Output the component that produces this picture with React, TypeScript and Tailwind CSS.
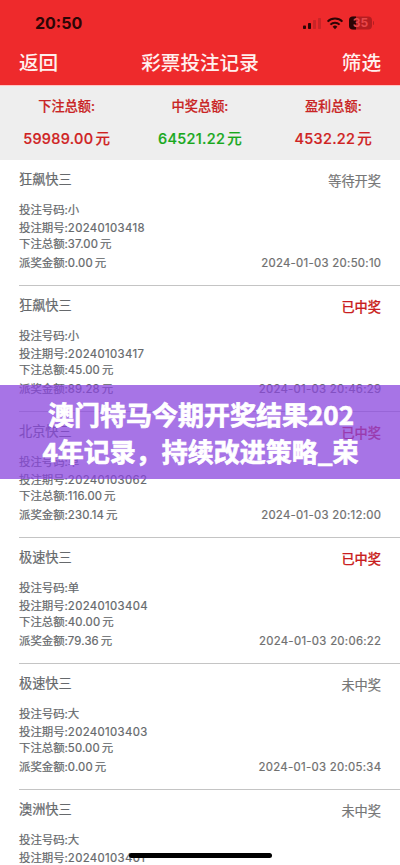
import React from "react";

type Status = "等待开奖" | "已中奖" | "未中奖";

interface Bet {
  game: string;
  status: Status;
  pick: string;
  issue: string;
  stake: string;
  prize: string;
  time: string;
}

const bets: Bet[] = [
  { game: "狂飙快三", status: "等待开奖", pick: "小", issue: "20240103418", stake: "37.00", prize: "0.00", time: "2024-01-03 20:50:10" },
  { game: "狂飙快三", status: "已中奖", pick: "小", issue: "20240103417", stake: "45.00", prize: "89.28", time: "2024-01-03 20:46:29" },
  { game: "北京快三", status: "已中奖", pick: "单", issue: "20240103062", stake: "116.00", prize: "230.14", time: "2024-01-03 20:12:00" },
  { game: "极速快三", status: "已中奖", pick: "单", issue: "20240103404", stake: "40.00", prize: "79.36", time: "2024-01-03 20:06:22" },
  { game: "极速快三", status: "未中奖", pick: "大", issue: "20240103403", stake: "50.00", prize: "0.00", time: "2024-01-03 20:05:34" },
];

const lastBet = { game: "澳洲快三", status: "未中奖", pick: "大", issue: "20240103401" };

const totals = [
  { label: "下注总额:", value: "59989.00", color: "text-[#cf2222]" },
  { label: "中奖总额:", value: "64521.22", color: "text-[#18a81c]" },
  { label: "盈利总额:", value: "4532.22", color: "text-[#cf2222]" },
];

function StatusBar() {
  return (
    <div className="flex h-[46px] items-center justify-between pl-[35px] pr-[26px]">
      <span className="text-[16px] leading-[20px] font-bold text-[#2d0505]">20:50</span>
      <svg width="72" height="14" viewBox="0 0 72 14">
        <g fill="#2d0505">
          <rect x="1" y="9.5" width="3" height="3.5" rx="0.8" />
          <rect x="6" y="7" width="3" height="6" rx="0.8" />
        </g>
        <g fill="#c92427">
          <rect x="11" y="4" width="3" height="9" rx="0.8" />
          <rect x="16" y="2" width="3" height="11" rx="0.8" />
        </g>
        <g fill="none" stroke="#2d0505" strokeWidth="2">
          <path d="M25.6 5.6a10.6 10.6 0 0 1 14.8 0" />
          <path d="M28.4 8.6a6.6 6.6 0 0 1 9.2 0" />
        </g>
        <path d="M33 13.2l-2.4-2.5a3.5 3.5 0 0 1 4.8 0z" fill="#2d0505" />
        <rect x="47" y="0.5" width="23" height="13" rx="4" fill="#b51d20" />
        <path d="M51 0.5h3v13h-3a4 4 0 0 1-4-4v-5a4 4 0 0 1 4-4z" fill="#2d0505" />
        <path d="M71 5v4a2.2 2.2 0 0 0 0-4z" fill="#b51d20" />
        <text x="58.5" y="11.2" textAnchor="middle" fontSize="12" fontWeight="700" fill="#e8474a" fontFamily="Inter, sans-serif">35</text>
      </svg>
    </div>
  );
}

function RowHeading({ game, status }: { game: string; status: string }) {
  const won = status === "已中奖";
  return (
    <div className="flex h-[41px] items-center justify-between text-[13.2px]">
      <span className="pb-px">{game}</span>
      <span className={won ? "pt-[2px] font-medium text-[#c91d20]" : "pt-[2px] text-[#777777]"}>{status}</span>
    </div>
  );
}

function PickAndIssue({ pick, issue }: { pick: string; issue: string }) {
  return (
    <>
      <div className="h-[18px] leading-[18px]">投注号码:{pick}</div>
      <div className="h-[19px] leading-[19px]">
        投注期号:<span className="tracking-[0.35px]">{issue}</span>
      </div>
    </>
  );
}

function Amount({ label, value }: { label: string; value: string }) {
  return (
    <span>
      {label}
      <span className="tracking-[0.15px]">{value}</span>
      <span className="ml-[2px]">元</span>
    </span>
  );
}

function BetRow({ bet }: { bet: Bet }) {
  return (
    <div className="ml-[19px] flex h-[126px] shrink-0 flex-col border-b border-[#c4c4c4] pr-[19px]">
      <RowHeading game={bet.game} status={bet.status} />
      <PickAndIssue pick={bet.pick} issue={bet.issue} />
      <div className="h-[13px] leading-[13px]">
        <Amount label="下注总额:" value={bet.stake} />
      </div>
      <div className="flex h-[25px] items-center justify-between">
        <Amount label="派奖金额:" value={bet.prize} />
        <span className="-mr-[0.3px] tracking-[0.29px] text-[#707070]">{bet.time}</span>
      </div>
    </div>
  );
}

export default function App() {
  return (
    <div className="relative flex h-[865px] w-[400px] flex-col overflow-hidden bg-white font-['Inter','Noto_Sans_CJK_SC',sans-serif]">
      <header className="h-[85px] shrink-0 bg-[#ee2a2c]">
        <StatusBar />
        <div className="grid h-[36px] grid-cols-3 items-center px-[19px] text-[19.6px] font-medium text-[#fff0ee]">
          <span>返回</span>
          <span className="text-center whitespace-nowrap">彩票投注记录</span>
          <span className="text-right">筛选</span>
        </div>
      </header>

      <section className="grid h-[75px] shrink-0 grid-cols-3 border-t border-[#ffc4c4] bg-[#eeeeee] font-medium [-webkit-text-stroke:0.2px]">
        {totals.map((t) => (
          <div key={t.label} className="flex flex-col items-center">
            <span className="mt-[10px] text-[13.2px] leading-[20px] text-[#c92424]">{t.label}</span>
            <span className={`mt-[13px] text-[14.5px] leading-[20px] tracking-[0.3px] ${t.color}`}>
              {t.value}
              <span className="ml-[2px]">元</span>
            </span>
          </div>
        ))}
      </section>

      <main className="flex flex-col text-[11.4px] text-[#66696c] [-webkit-text-stroke:0.2px]">
        {bets.map((b) => (
          <BetRow key={b.issue} bet={b} />
        ))}
        <div className="ml-[19px] pr-[19px]">
          <RowHeading game={lastBet.game} status={lastBet.status} />
          <PickAndIssue pick={lastBet.pick} issue={lastBet.issue} />
        </div>
      </main>

      <div className="absolute top-[385px] left-0 flex h-[94px] w-full flex-col items-center justify-center bg-[#8a45dd]/75 font-['Noto_Sans_CJK_SC',sans-serif] text-[26px] leading-[37px] font-bold whitespace-nowrap text-white [-webkit-text-stroke:0.7px]">
        <span className="pl-[2px]">澳门特马今期开奖结果202</span>
        <span className="pl-[1px]">4年记录，持续改进策略_荣</span>
      </div>

      <div className="absolute top-[853px] left-[129px] h-[5px] w-[143px] rounded-full bg-black" />
    </div>
  );
}
